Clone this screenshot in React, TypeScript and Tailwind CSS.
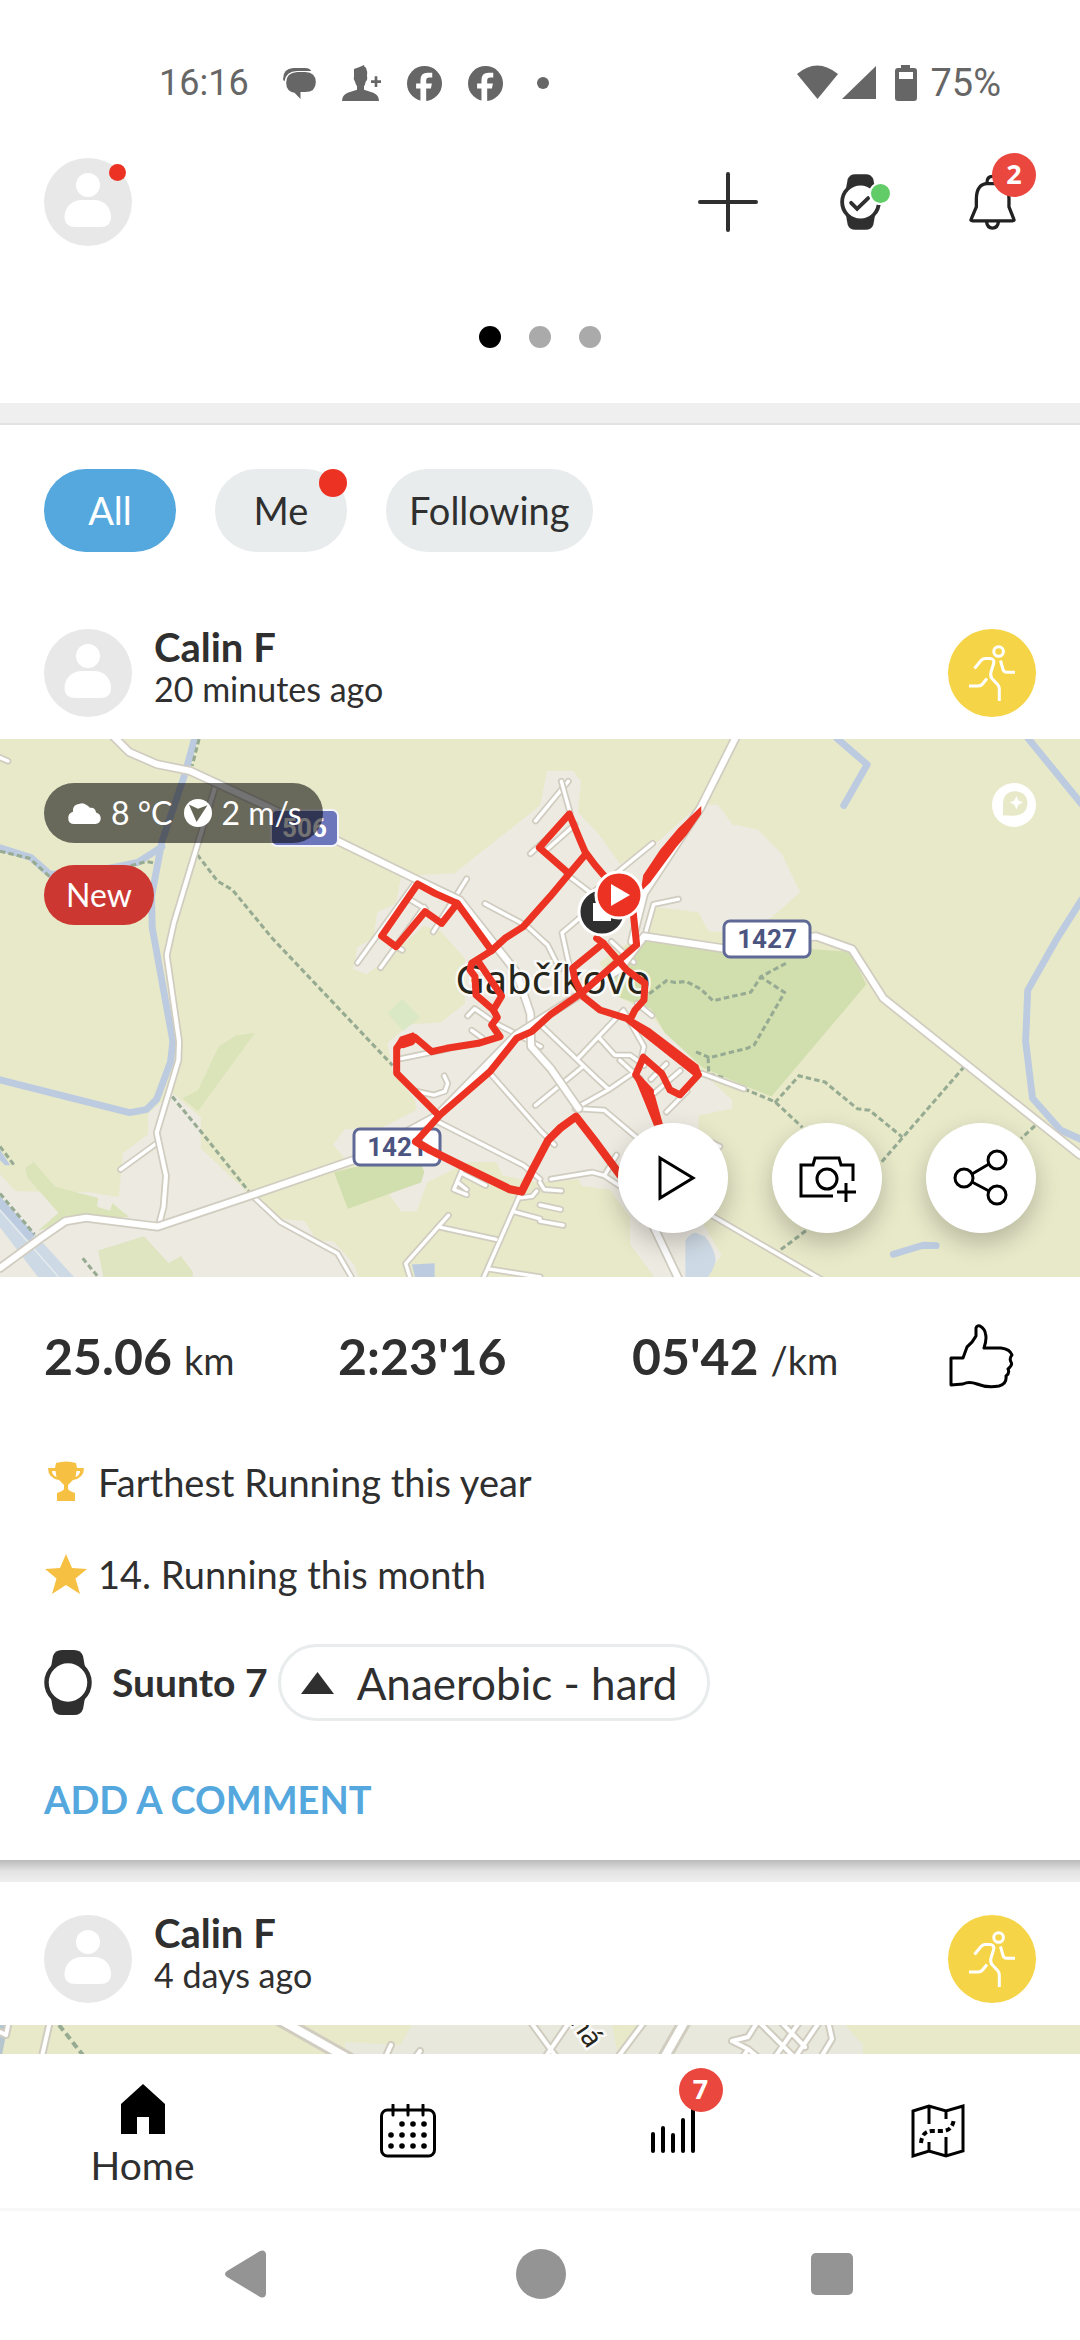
import type { ReactNode } from 'react'
import { clsx } from 'clsx'

const MAP_COLORS = {
  field: '#e8e9c9',
  urban: '#edeae1',
  park: '#d1deae',
  grass: '#dae4b8',
  water: '#bccbe0',
  casing: '#d0ccc0',
  path: '#97ab93',
  route: '#ec3323',
}

function Roads({ d, width }: { d: string; width: number }) {
  return (
    <g fill="none" strokeLinecap="round" strokeLinejoin="round">
      <path d={d} stroke={MAP_COLORS.casing} strokeWidth={width + 10} />
      <path d={d} stroke="#fff" strokeWidth={width} />
    </g>
  )
}

function RoadSign({ x, y, w, children, blue }: { x: number; y: number; w: number; children: string; blue?: boolean }) {
  return (
    <g>
      <rect
        x={x}
        y={y}
        width={w}
        height={36}
        rx={6}
        fill={blue ? '#6c76bb' : '#fff'}
        stroke={blue ? '#f4f4fa' : '#5f6996'}
        strokeWidth={blue ? 2 : 3}
      />
      <text
        x={x + w / 2}
        y={y + 27}
        textAnchor="middle"
        fill={blue ? '#fff' : '#4c5480'}
        className="font-['Roboto',sans-serif] text-[26px] font-bold"
      >
        {children}
      </text>
    </g>
  )
}

function ActivityMap() {
  return (
    <svg viewBox="0 0 1080 538" className="block w-full" role="img" aria-label="Route map of Gabčíkovo">
      <rect width="1080" height="538" fill={MAP_COLORS.field} />

      <g transform="scale(0.3444) translate(0 -12)">
        {/* built-up areas */}
        <g fill={MAP_COLORS.urban}>
          <path d="M1588 105L1663 105L1687 135L1678 225L1740 290L1800 375L1910 310L2030 203L2085 203L2127 260L2200 275L2270 345L2323 457L2240 530L2140 575L2057 570L2028 515L1900 500L1880 580L1830 600L1740 660L1790 760L1880 800L1930 865L1990 920L2060 1000L2126 1060L2126 1085L2028 1105L2030 1400L2095 1510L2050 1574L1900 1574L1830 1480L1830 1400L1770 1320L1690 1310L1680 1290L1568 1300L1460 1280L1440 1240L1360 1240L1240 1300L1210 1384L1165 1384L1120 1320L1000 1230L968 1190L1000 1145L1110 1140L1208 1090L1205 1060L1140 975L1125 895L1190 840L1280 835L1350 780L1350 650L1280 570L1230 555L1110 660L1065 695L1025 680L1038 616L1085 590L1095 515L1150 490L1165 410L1320 402L1568 205L1580 150Z" />
          <path d="M430 1100L500 1040L583 1110L583 1200L720 1330L820 1405L885 1412L920 1468L968 1470L1030 1540L1040 1574L0 1574L0 1275L45 1325L260 1328L345 1342L357 1215L430 1160Z" />
        </g>

        {/* parks and grass */}
        <g fill={MAP_COLORS.park}>
          <path d="M1850 590L2470 630L2515 725L2240 1050L2140 1010L2040 965L1985 915L1930 865L1890 795L1780 755L1760 670Z" />
          <path d="M970 1270L1090 1240L1222 1245L1232 1270L1222 1300L1010 1376Z" />
        </g>
        <g fill={MAP_COLORS.grass}>
          <path d="M530 1055L575 1032L635 905L685 873L740 866L575 1092Z" />
          <path d="M73 1258L98 1241L160 1312L285 1345L282 1370L320 1382L326 1360L375 1400L250 1410L180 1420L110 1440L170 1388L80 1285Z" />
          <path d="M285 1497L418 1456L490 1534L525 1513L560 1560L560 1574L300 1574Z" opacity=".8" />
          <path d="M1125 808L1168 766L1220 820L1170 860Z" fill="#dbe8c6" />
        </g>

        {/* water */}
        <g fill="none" stroke={MAP_COLORS.water} strokeLinecap="round" strokeLinejoin="round" strokeWidth="20">
          <path d="M568 0L535 120L470 310L455 390L440 470L442 560L502 890L495 950L455 1058L425 1088L376 1097L0 1002" />
          <path d="M0 328L90 356L145 405L235 400L330 385L400 370L470 325" />
          <path d="M2430 10L2518 86L2450 205" />
          <path d="M2985 10L3140 200M3140 480L3070 590L2984 742L2978 890L2998 1055L3080 1148L3140 1175" />
          <path d="M2594 1508L2680 1482L2718 1483" />
        </g>
        <path d="M0 1340L215 1574L110 1574L0 1430Z" fill="#cdd9e4" />
        <path d="M0 1340L100 1452L85 1470L0 1375Z" fill={MAP_COLORS.water} />
        <path d="M0 1380L170 1574" stroke="#e6ebee" strokeWidth="4" />
        <path d="M0 1205L30 1250L15 1250L0 1235Z" fill={MAP_COLORS.water} />
        <path d="M1990 1574L1990 1470Q2000 1450 2020 1446L2046 1456Q2075 1490 2078 1525Q2075 1550 2055 1574Z" fill="#cdd9e4" />
        <path d="M1196 1538L1262 1534L1262 1574L1205 1574Z" fill={MAP_COLORS.water} />

        {/* footpaths */}
        <g fill="none" stroke={MAP_COLORS.path} strokeDasharray="16 9" strokeWidth="9">
          <path d="M578 12L558 90" />
          <path d="M0 338L85 358L145 412M380 380L425 368L448 372" />
          <path d="M573 348L632 425L675 450L790 590L1140 960" />
          <path d="M500 1050L590 1160L722 1325" />
          <path d="M0 1195L40 1248M0 1332L100 1450M240 1520L285 1574" />
          <path d="M1885 752L1935 714L1960 719L1992 716L2035 738L2070 772L2180 747L2210 702L2288 660M2205 700L2278 748L2190 900L2170 910L2060 937L2020 920M2056 937L2058 985L2100 995" />
          <path d="M2160 1028L2250 1065L2330 1140M2250 1068L2320 990L2395 1008L2490 1086L2525 1090L2620 1168M2800 963L2560 1240M3005 1135L2965 1172M2360 1425L2260 1500" />
        </g>

        {/* minor streets */}
        <Roads
          width={10}
          d="M0 66L23 76M350 1262L460 1182M740 1345L815 1415L980 1505L1020 1574M1038 662L1205 430M1105 676L1232 500M1258 572L1355 418M1408 490L1530 555L1590 610L1625 680M1190 478L1235 505M1150 615L1168 625M1358 816L1378 795L1440 838L1570 905M1370 858L1400 880M1165 940L1300 912M1210 1035L1260 1046L1292 1035L1300 1012L1290 990M1425 985L1570 1150L1610 1190M1265 1120L1520 1250L1568 1290M1555 1076L1690 965M1568 840L1735 1000L1768 1030M1678 940L1810 800M1740 880L1785 930L1830 930L1870 960M1810 800L1870 905L1855 970L1768 1030L1670 1085M1670 1085L1755 1090L1850 1170M1600 1290L1720 1270L1755 1280L1800 1310M1755 1280L1790 1220M1650 135L1555 250M1580 340L1670 260M1540 345L1600 290M1895 315L1730 450M1970 477L1898 492L1873 580M1720 500L1632 575L1655 680M1645 405L1730 470M1775 600L1840 660M1850 780L1893 815M1800 945L1860 1000M1890 1000L1935 955M1900 1040L1975 975M1935 1095L1995 1035M1345 1255L1318 1320L1355 1335M1345 1275L1410 1308M1330 1300L1355 1320M1510 1335L1405 1574M1505 1345L1545 1340L1558 1325M1495 1385L1568 1405M1280 1430L1440 1465M1302 1395L1178 1535L1190 1574M1415 1550L1568 1574M1568 1300L1580 1320L1630 1324M1568 1365L1628 1378M1568 1412L1635 1424M2000 1150L2090 1195"
        />
        <Roads width={10} d="M2038 983L2160 1028M2040 1380L2400 1590" />
        <Roads width={10} d="M1630 135L1655 225" />
        <Roads width={12} d="M625 150L570 330L505 545L484 640L520 890L518 945L455 1155L482 1280L475 1370L460 1428" />

        {/* main roads */}
        <Roads
          width={18}
          d="M325 0L375 50L455 85L550 104L780 210L1210 420L1335 480L1500 690L1540 810L1542 905L1600 970L1680 1085"
        />
        <Roads width={18} d="M0 1548L120 1460L190 1412L250 1402L458 1428L735 1335L1040 1230L1270 1105L1500 870L1800 680L1870 585L2100 620L2370 585L2474 622L2565 765L3136 1220" />
        <Roads width={18} d="M2140 0L2035 210L1870 460L1835 600M1870 1370L1975 1590" />
      </g>

      <RoadSign x={271} y={71} w={67} blue>506</RoadSign>
      <RoadSign x={724} y={182} w={86}>1427</RoadSign>
      <RoadSign x={354} y={390} w={86}>1421</RoadSign>
      <text
        x={553}
        y={255}
        textAnchor="middle"
        fill="#26261c"
        stroke="#fff"
        strokeWidth="5"
        strokeOpacity=".8"
        paintOrder="stroke"
        className="font-['Noto_Sans',sans-serif] text-[40px]"
      >
        Gabčíkovo
      </text>

      {/* recorded route */}
      <g transform="translate(350 41) scale(0.3333)" fill="none" stroke={MAP_COLORS.route} strokeLinejoin="round" strokeLinecap="round" strokeWidth="21">
        <path d="M765 290L735 255L705 215L690 180L658 102L568 203L650 275M705 225L650 290L600 350L520 440L465 475L425 512L365 550L360 570L375 590L378 645L430 690L442 712L425 735L450 770L385 790L290 805L245 815L195 772L160 780L140 805L140 880L265 1005" />
        <path d="M425 512L322 370L275 430L225 395L138 500L95 468L203 312L255 340L322 370" />
        <path d="M385 545L455 648L430 690" />
        <path d="M198 1085L270 1005L420 875L500 775L545 755L600 705L700 635L860 495L850 400" />
        <path d="M198 1085L240 1110L340 1160L480 1228L515 1235L550 1165L595 1080L630 1045L678 1010L740 1090L810 1185" strokeWidth="24" />
        <path d="M740 475L760 490L668 565L675 600L700 650L750 690L830 715L1045 885L990 945L960 930L935 880L880 832L857 885L905 950L930 1040" />
        <path d="M760 490L830 570L885 610L882 660L855 690L845 710" />
      </g>
      <g transform="translate(350 41) scale(0.3333)" fill={MAP_COLORS.route}>
        <path d="M1054 78L1054 102L1010 165L980 200L900 308L872 335L880 285L930 210L985 145Z" />
        <path d="M830 705L900 745L1045 855L1056 885L1030 885L860 750Z" />
        <path d="M848 880L870 885L912 930L910 980L937 1040L915 1045L885 970Z" />
        <path d="M132 800L150 770L190 757L208 775L190 795L160 805Z" />
      </g>

      <g transform="translate(602 173)">
        <circle r="23" fill="#2f2f2f" stroke="#fff" strokeWidth="3" />
        <rect x="-9" y="-9" width="18" height="18" fill="#fff" />
      </g>
      <g transform="translate(619 156)">
        <circle r="23" fill={MAP_COLORS.route} stroke="#fff" strokeWidth="3" />
        <path d="M-8 -11L11 0L-8 11Z" fill="#fff" />
      </g>
    </svg>
  )
}

const NEXT_MAP_STREETS =
  'M9 -4L6 10L0 7M50 -4L40 40M391 20L382 40M420 26L410 40M530 -4L562 40M570 -4L540 40M645 -4L612 40M738 40L748 24L732 16L748 12L758 -4M748 24L765 38M760 -2L792 30M780 -4L805 22M800 -4L775 32M820 -4L790 40M828 -4L832 14L820 34'

function NextActivityMap() {
  return (
    <svg viewBox="0 0 1080 538" className="block w-full" role="img" aria-label="Route map">
      <rect width="1080" height="538" fill={MAP_COLORS.field} />
      <path d="M412 0H845L863 20V538H345V17L400 20Z" fill="#e9e8dc" />
      <path d="M612 0H645L625 30H618Z" fill={MAP_COLORS.field} />
      <path d="M0 0H8L0 40Z" fill="#b5c6cf" />
      <g fill="none" strokeLinecap="round" strokeLinejoin="round">
        <path d={NEXT_MAP_STREETS} stroke={MAP_COLORS.casing} strokeWidth="8" />
        <path d={NEXT_MAP_STREETS} stroke="#fff" strokeWidth="4" />
        <path d="M275 -8L360 40M685 -4L660 40" stroke={MAP_COLORS.casing} strokeWidth="14" />
        <path d="M275 -8L360 40M685 -4L660 40" stroke="#fff" strokeWidth="8" />
        <path d="M59 0L86 34" stroke={MAP_COLORS.path} strokeDasharray="7 4" strokeWidth="4" strokeLinecap="butt" />
      </g>
      <text
        transform="translate(562 -14) rotate(56)"
        fill="#26261c"
        stroke="#fff"
        strokeWidth="5"
        strokeOpacity=".8"
        paintOrder="stroke"
        className="font-['Noto_Sans',sans-serif] text-[28px]"
      >
        čná
      </text>
    </svg>
  )
}

function WatchIcon({ className, checked }: { className: string; checked?: boolean }) {
  return (
    <svg viewBox="0 0 48 65" className={className} aria-hidden="true">
      <path d="M7 17L9 6Q11 0 18 0H30Q37 0 39 6L41 17V48L39 59Q37 65 30 65H18Q11 65 9 59L7 48Z" fill="#2f2f2f" />
      <circle cx="24" cy="32.5" r="21.5" fill="#fff" stroke="#2f2f2f" strokeWidth="4.5" />
      {checked && (
        <path d="M13 33.5L20 40.5L33 28" fill="none" stroke="#2f2f2f" strokeWidth="4.5" strokeLinecap="round" />
      )}
    </svg>
  )
}

function Avatar() {
  return (
    <svg viewBox="0 0 88 88" className="size-[88px] shrink-0" aria-hidden="true">
      <circle cx="44" cy="44" r="44" fill="#e8e8e8" />
      <circle cx="44" cy="27" r="12" fill="#fff" />
      <path d="M20.500 59C20.500 49 28 42 38 42H50C60 42 67 49 67 59Q67 69 56 69H32Q20.500 69 20.500 59Z" fill="#fff" />
    </svg>
  )
}

function RunningIcon() {
  return (
    <svg viewBox="0 0 88 88" className="size-[88px] shrink-0" role="img" aria-label="Running">
      <circle cx="44" cy="44" r="44" fill="#f5d547" />
      <g fill="none" stroke="#fff" strokeWidth="3">
        <circle cx="50.600" cy="22.500" r="4.800" />
        <path d="M26.500 39.500L33 31.500Q35 29.500 37 29.500H42Q47 30 45.500 35L43 43Q42 47 44 49.500L50 56Q51.300 58 51.300 60V72" />
        <path d="M21 57H30Q33 57 34.500 55L39 49.500" />
        <path d="M52.500 31.500L55 40.500Q56 43.300 58.500 43.300H67" />
      </g>
    </svg>
  )
}

function FacebookIcon() {
  return (
    <svg viewBox="0 0 104 104" className="size-[35px]" aria-hidden="true">
      <circle cx="52" cy="52" r="52" fill="#666" />
      <path d="M40 104V67H27V52H40V42Q40 20 61 20H75V34H66Q57 34 57 43V52H74L71 67H57V104Z" fill="#fff" />
    </svg>
  )
}

function StatusBar() {
  return (
    <div className="flex h-[106px] items-end justify-between pr-[79px] pl-[159px] font-['Roboto',sans-serif] text-[36px] leading-[46px] text-[#666]">
      <div className="flex items-center gap-[26px]">
        <span className="pr-2">16:16</span>
        <svg viewBox="0 0 98 93" className="h-[31px] w-[33px]" fill="#666" aria-hidden="true">
          <path d="M0 36Q-2 2 30 0H66Q80 0 84 9H42Q8 10 4 40Z" />
          <path d="M42 12H66Q98 14 98 42Q98 72 66 72H52V93L34 74Q9 70 9 44Q9 14 42 12Z" />
        </svg>
        <svg viewBox="0 0 117 108" className="h-9 w-[39px]" fill="#666" aria-hidden="true">
          <path d="M36 12Q50 8 66 0Q66 6 72 8Q77 18 75 34Q78 44 71 50Q69 60 66 64V74L94 83Q111 90 111 108H0Q0 90 17 83L45 74V64Q41 58 39 50Q33 44 36 34Z" />
          <path d="M98 34H106V46H117V54H106V66H98V54H87V46H98Z" />
        </svg>
        <FacebookIcon />
        <FacebookIcon />
        <span className="ml-2 size-3 rounded-full bg-[#666]" />
      </div>
      <div className="flex items-center">
        <svg viewBox="0 0 121 36" className="h-9 w-[121px]" fill="#666" aria-hidden="true">
          <path d="M0 9Q20 -8 41 9L20.500 34Z" />
          <path d="M79 1V34H45Z" />
          <path fillRule="evenodd" d="M104 0H113V3H117Q120 3 120 6V33Q120 36 117 36H101Q98 36 98 33V6Q98 3 101 3H104ZM102 7V14H116V7Z" />
        </svg>
        <span className="pl-3 text-[38px]">75%</span>
      </div>
    </div>
  )
}

function Badge({ children, className }: { children: ReactNode; className?: string }) {
  return (
    <span
      className={clsx(
        "absolute flex size-[44px] items-center justify-center rounded-full bg-[#ea473f] pb-1 font-['Open_Sans',sans-serif] text-[27px] leading-none font-bold text-white",
        className,
      )}
    >
      {children}
    </span>
  )
}

function TopBar() {
  return (
    <header className="flex items-center justify-between px-[44px] pt-[52px]">
      <button type="button" aria-label="Profile" className="relative">
        <Avatar />
        <span className="absolute top-[6px] right-[6px] size-[17px] rounded-full bg-[#ec3323]" />
      </button>
      <div className="flex gap-[44px]">
        <button type="button" aria-label="Add" className="flex size-[88px] items-center justify-center">
          <svg viewBox="0 0 60 60" className="size-[60px]" stroke="#2f2f2f" strokeWidth="4" strokeLinecap="round">
            <path d="M30 2V58M2 30H58" />
          </svg>
        </button>
        <button type="button" aria-label="Watch connected" className="relative flex size-[88px] items-center justify-center">
          <WatchIcon className="h-14 w-[41px]" checked />
          <span className="absolute top-[24px] right-[12px] size-[23px] rounded-full border-2 border-white bg-[#62cc68]" />
        </button>
        <button type="button" aria-label="Notifications" className="relative flex size-[88px] items-center justify-center">
          <svg viewBox="835 100 142 170" className="h-14 w-[47px]" fill="none" stroke="#212121" strokeWidth="10" strokeLinejoin="round">
            <path d="M841 238L857 200V175Q858 130 890 129H922Q955 130 956 175V200L971 238Q973 242 967 242H845Q839 242 841 238Z" />
            <path d="M889 127Q889 107 906 107Q923 107 923 127M888 245Q890 264 906 264Q922 264 924 245" />
          </svg>
          <Badge className="-top-[5px] right-0">2</Badge>
        </button>
      </div>
    </header>
  )
}

function Filters() {
  const base = 'relative flex h-[83px] min-w-[132px] items-center justify-center rounded-full px-[23px] text-[38px]'
  return (
    <div className="flex gap-[39px] px-[44px] pt-[44px]">
      <button type="button" className={clsx(base, 'bg-[#55a8de] text-white')}>All</button>
      <button type="button" className={clsx(base, 'bg-[#e8ecec]')}>
        Me
        <span className="absolute top-0 right-0 size-7 rounded-full bg-[#ec3323]" />
      </button>
      <button type="button" className={clsx(base, 'bg-[#e8ecec]')}>Following</button>
    </div>
  )
}

function ActivityHeader({ name, time }: { name: string; time: string }) {
  return (
    <div className="flex items-start px-[44px] pb-[22px]">
      <Avatar />
      <div className="-mt-1 h-[84px] flex-1 pl-[22px]">
        <h2 className="text-[40px] leading-[44px] font-bold">{name}</h2>
        <p className="text-[34px] leading-[40px]">{time}</p>
      </div>
      <RunningIcon />
    </div>
  )
}

function RoundButton({ label, children }: { label: string; children: ReactNode }) {
  return (
    <button
      type="button"
      aria-label={label}
      className="flex size-[110px] items-center justify-center rounded-full bg-white shadow-[0_10px_24px_rgba(0,0,0,0.22)]"
    >
      {children}
    </button>
  )
}

function MapSection() {
  return (
    <div className="relative">
      <ActivityMap />
      <div className="absolute top-[44px] left-[44px] flex flex-col items-start gap-[22px] text-[32px] leading-[60px] text-white">
        <div className="flex items-center rounded-full bg-black/55 pr-[21px] pl-[24px]">
          <svg viewBox="0 0 96 62" className="h-[21px] w-[33px]" fill="#fff" aria-hidden="true">
            <path d="M18 62Q0 62 0 44Q0 30 14 26Q12 4 34 2Q44 -2 54 6Q60 10 64 14Q80 12 82 28Q96 32 96 46Q94 62 80 62Z" />
          </svg>
          <span className="pr-3 pl-[10px]">8 °C</span>
          <svg viewBox="0 0 80 80" className="size-7" aria-hidden="true">
            <circle cx="40" cy="40" r="40" fill="#fff" />
            <path d="M14 16L40 28L67 18L36 66Z" fill="#666657" />
          </svg>
          <span className="pl-[9px]">2 m/s</span>
        </div>
        <div className="rounded-full bg-[#cc3731] px-[22px]">New</div>
      </div>
      <svg viewBox="0 0 128 128" className="absolute top-[44px] right-[44px] size-11" aria-label="Mapbox">
        <circle cx="64" cy="64" r="64" fill="#fff" />
        <path d="M32 94V60Q34 24 68 24Q102 26 103 60Q100 96 60 95Z" fill={MAP_COLORS.field} />
        <path d="M71 38L77 51L90 57L77 63L71 76L65 63L52 57L65 51Z" fill="#fff" />
      </svg>
      <div className="absolute right-[44px] bottom-[44px] flex gap-[44px]">
        <RoundButton label="Play route">
          <svg viewBox="0 0 110 110" className="size-[110px]" fill="none" stroke="#000" strokeWidth="3">
            <path d="M42 35L75 55L42 75Z" />
          </svg>
        </RoundButton>
        <RoundButton label="Add photo">
          <svg viewBox="0 0 110 110" className="size-[110px]" fill="none" stroke="#000" strokeWidth="3">
            <path d="M61 73H29V42H41L43 35H67L69 42H81V58" />
            <circle cx="55" cy="56" r="10" />
            <path d="M74 60V79M65 69H84" />
          </svg>
        </RoundButton>
        <RoundButton label="Share">
          <svg viewBox="0 0 110 110" className="size-[110px]" fill="none" stroke="#000" strokeWidth="3">
            <circle cx="38" cy="55" r="9" />
            <circle cx="71" cy="37" r="9" />
            <circle cx="71" cy="72" r="9" />
            <path d="M46 51L63 41M46 59L63 68" />
          </svg>
        </RoundButton>
      </div>
    </div>
  )
}

function Stat({ value, unit }: { value: string; unit?: string }) {
  return (
    <div className="text-[50px] font-bold whitespace-nowrap">
      {value}
      {unit && <span className="pl-3 text-[38px] font-normal">{unit}</span>}
    </div>
  )
}

function Summary() {
  return (
    <div className="px-[44px]">
      <div className="grid h-[159px] grid-cols-[1fr_1fr_1fr_110px] items-center">
        <Stat value="25.06" unit="km" />
        <Stat value="2:23'16" />
        <Stat value="05'42" unit="/km" />
        <button type="button" aria-label="Like" className="flex justify-center">
          <svg viewBox="0 0 65 65" className="size-[65px]" fill="none" stroke="#000" strokeWidth="3" strokeLinejoin="round">
            <path d="M2 34H14L18 23Q24 18 27 12V4Q28 1 31 2Q36 5 36.500 10Q38 15 35 24L52 24Q61 25 63 31Q60 34 62 38Q64 41 59 45Q61 49 57 52Q58 60 50 62Q38 64 28 60Q20 57 14 60L2 61Z" />
          </svg>
        </button>
      </div>
      <div className="flex h-[92px] items-center text-[38px]">
        <svg viewBox="0 0 44 44" className="mr-[10px] size-[44px]" fill="#f6c042" aria-hidden="true">
          <path d="M12 3Q22 0 32 3L33 8H40Q40 18 29 20Q25 24 24 25V29Q25 31 31 33V41H13V33Q19 31 20 29V25Q19 24 15 20Q4 18 4 8H11Z" />
          <path d="M8 11Q8 15 12.500 17L11.500 11ZM36 11Q36 15 31.500 17L32.500 11Z" fill="#fff" />
        </svg>
        Farthest Running this year
      </div>
      <div className="flex h-[92px] items-center text-[38px]">
        <svg viewBox="0 0 44 44" className="mr-[10px] size-[44px]" fill="#f6c042" aria-hidden="true">
          <path d="M22 2L28 16L43 17L31.500 26.500L36 42L22 33L8 42L12.500 26.500L1 17L16 16Z" />
        </svg>
        14. Running this month
      </div>
      <div className="flex items-center pt-6">
        <WatchIcon className="h-[65px] w-12" />
        <span className="pr-[10px] pl-[20px] text-[39px] font-bold">Suunto 7</span>
        <div className="flex h-[77px] items-center gap-[23px] rounded-full border-[3px] border-[#e8ecec] pr-[30px] pl-[20px] text-[44px]">
          <svg viewBox="0 0 33 22" className="h-[22px] w-[33px]" fill="#2f2f2f" aria-hidden="true">
            <path d="M16.500 0L33 22H0Z" />
          </svg>
          Anaerobic - hard
        </div>
      </div>
      <button type="button" className="block pt-[55px] pb-[38px] text-[38px] leading-[46px] font-bold text-[#55a8de]">
        ADD A COMMENT
      </button>
    </div>
  )
}

function TabBar() {
  const item = 'flex flex-1 flex-col items-center justify-center'
  return (
    <nav className="relative flex h-[154px] shrink-0 bg-white px-[10px]">
      <a href="#home" className={clsx(item, 'gap-2 pt-[10px] text-[39px] leading-[46px]')}>
        <svg viewBox="0 0 44 50" className="h-[50px] w-11" aria-hidden="true">
          <path d="M22 0L44 20V50H28V33H16V50H0V20Z" />
        </svg>
        Home
      </a>
      <a href="#calendar" aria-label="Calendar" className={item}>
        <svg viewBox="0 0 56 54" className="h-[54px] w-14" aria-hidden="true">
          <rect x="1.500" y="6" width="53" height="46" rx="6" fill="none" stroke="#000" strokeWidth="3" />
          <path d="M13 1V11M28 1V11M43 1V11" stroke="#000" strokeWidth="3" strokeLinecap="round" />
          {[20, 31, 42].map((cy) =>
            [11, 22, 33, 44]
              .filter((cx) => cy > 20 || cx > 11)
              .map((cx) => <circle key={`${cx}-${cy}`} cx={cx} cy={cy} r="2.800" />),
          )}
        </svg>
      </a>
      <a href="#trends" aria-label="Trends, 7 new" className={item}>
        <div className="relative">
          <svg viewBox="0 0 56 54" className="h-[54px] w-14" stroke="#000" strokeWidth="4" strokeLinecap="round" aria-hidden="true">
            <path d="M8 30V47M18 24V47M28 31V47M38 16V47M48 4V47" />
          </svg>
          <Badge className="-top-[36px] left-[34px]">7</Badge>
        </div>
      </a>
      <a href="#map" aria-label="Maps" className={item}>
        <svg viewBox="0 0 54 54" className="size-[54px]" fill="none" stroke="#000" strokeWidth="3" aria-hidden="true">
          <path d="M2 7L18 2L35 7L52 2V47L35 52L18 47L2 52ZM18 2V20M35 7V15M35 33V52M18 38V47" />
          <path d="M10 39Q11 27 21 27H31Q42 27 43 14" strokeDasharray="5 3" strokeWidth="4" />
        </svg>
      </a>
    </nav>
  )
}

function SystemBar() {
  return (
    <div className="flex h-[132px] shrink-0 items-center justify-around border-t-[3px] border-[#f8f8f8] pr-[104px] pb-[3px] pl-[98px]">
      <button type="button" aria-label="Back">
        <svg viewBox="0 0 50 50" className="size-[50px]" fill="#949494">
          <path d="M39 2Q44 0 45 5V45Q44 50 39 48L6 28Q2 25 6 22Z" />
        </svg>
      </button>
      <button type="button" aria-label="Home screen" className="size-[50px] rounded-full bg-[#949494]" />
      <button type="button" aria-label="Recent apps" className="size-[42px] rounded-[5px] bg-[#949494]" />
    </div>
  )
}

export default function App() {
  return (
    <div className="flex h-screen flex-col overflow-hidden bg-white font-['Lato',sans-serif] text-[#2f2f2f]">
      <StatusBar />
      <TopBar />
      <main className="min-h-0 flex-1 overflow-hidden">
        <div className="flex justify-center gap-7 pt-[80px] pb-[55px]">
          <span className="size-[22px] rounded-full bg-black" />
          <span className="size-[22px] rounded-full bg-[#aaa]" />
          <span className="size-[22px] rounded-full bg-[#aaa]" />
        </div>
        <div className="h-[22px] border-b-2 border-[#e2e2e2] bg-[#efefef]" />
        <section>
          <Filters />
          <div className="pt-[77px]">
            <ActivityHeader name="Calin F" time="20 minutes ago" />
          </div>
          <MapSection />
          <Summary />
        </section>
        <div className="h-[22px] bg-linear-to-b from-[#b9bab9] via-[#e3e3e3] to-[#efefef]" />
        <section className="pt-[33px]">
          <ActivityHeader name="Calin F" time="4 days ago" />
          <NextActivityMap />
        </section>
      </main>
      <TabBar />
      <SystemBar />
    </div>
  )
}
